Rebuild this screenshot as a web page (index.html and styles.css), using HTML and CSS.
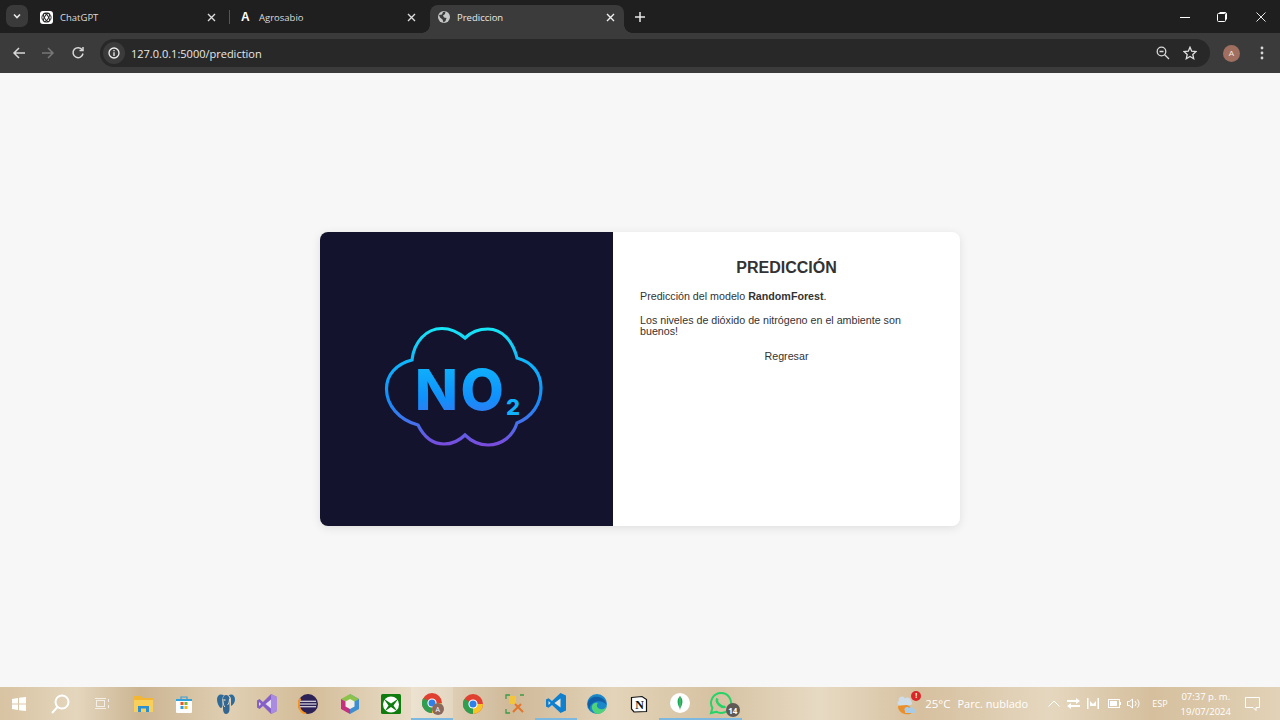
FILE: index.html
```html
<!DOCTYPE html>
<html lang="es">
<head>
  <meta charset="UTF-8">
  <title>Prediccion</title>
  <link rel="stylesheet" href="styles.css">
</head>
<body>
  <div class="tabstrip">
    <div class="tab-menu">
      <svg width="10" height="10" viewBox="0 0 10 10"><path d="M2 3.5 5 6.5 8 3.5" fill="none" stroke="#e8e8e8" stroke-width="1.6"/></svg>
    </div>
    <div class="tab tab-first">
      <span class="favicon favicon-gpt">
        <svg width="13" height="13" viewBox="0 0 13 13" fill="none" stroke="#222" stroke-width="1"><circle cx="6.5" cy="6.5" r="4.6"/><ellipse cx="6.5" cy="6.5" rx="2" ry="4.6" transform="rotate(30 6.5 6.5)"/><ellipse cx="6.5" cy="6.5" rx="2" ry="4.6" transform="rotate(-30 6.5 6.5)"/></svg>
      </span>
      <span class="tab-title">ChatGPT</span>
      <svg class="tab-close" width="9" height="9" viewBox="0 0 9 9"><path d="M1 1 8 8M8 1 1 8" stroke="#dcdcdc" stroke-width="1.4"/></svg>
    </div>
    <div class="tab-sep"></div>
    <div class="tab tab-second">
      <span class="favicon favicon-agro">A</span>
      <span class="tab-title">Agrosabio</span>
      <svg class="tab-close" width="9" height="9" viewBox="0 0 9 9"><path d="M1 1 8 8M8 1 1 8" stroke="#dcdcdc" stroke-width="1.4"/></svg>
    </div>
    <div class="tab tab-active">
      <svg class="favicon" width="12" height="12" viewBox="0 0 12 12"><circle cx="6" cy="6" r="6" fill="#c4c7c5"/><path d="M1 4 4 3.5 5 1 7.5 .6 7 3 5 4.5 6 6.5 8.5 7 7.500 10 5.500 11.500 4.500 8.500 2 6.500Z" fill="#3b3b3b"/></svg>
      <span class="tab-title">Prediccion</span>
      <svg class="tab-close" width="9" height="9" viewBox="0 0 9 9"><path d="M1 1 8 8M8 1 1 8" stroke="#f0f0f0" stroke-width="1.4"/></svg>
    </div>
    <svg class="new-tab" width="10" height="10" viewBox="0 0 10 10"><path d="M5 0V10M0 5H10" stroke="#e8e8e8" stroke-width="1.5"/></svg>
    <div class="window-controls">
      <svg width="10" height="10" viewBox="0 0 10 10"><path d="M0 5.500H10" stroke="#fff"/></svg>
      <svg width="10" height="10" viewBox="0 0 10 10" fill="none" stroke="#fff"><rect x=".5" y="1.500" width="8" height="8" rx="1"/><path d="M2.500 .5H8A1.500 1.500 0 0 1 9.500 2V7.500"/></svg>
      <svg width="10" height="10" viewBox="0 0 10 10"><path d="M.5 .5 9.500 9.500M9.500 .5 .5 9.500" stroke="#e8e8e8"/></svg>
    </div>
  </div>

  <div class="toolbar">
    <svg class="nav-icon" width="14" height="14" viewBox="0 0 14 14" fill="none" stroke="#d8d8d8" stroke-width="1.5"><path d="M13 7H2M7 2 2 7 7 12"/></svg>
    <svg class="nav-icon nav-forward" width="14" height="14" viewBox="0 0 14 14" fill="none" stroke="#777" stroke-width="1.5"><path d="M1 7H12M7 2 12 7 7 12"/></svg>
    <svg class="nav-icon nav-reload" width="14" height="14" viewBox="0 0 14 14" fill="none" stroke="#d8d8d8" stroke-width="1.5"><path d="M11.300 4A5 5 0 1 0 12 7.500"/><path d="M12 1V4.500H8.500"/></svg>
    <div class="urlbar">
      <span class="url-info">
        <svg width="12" height="12" viewBox="0 0 12 12" fill="none" stroke="#f0f0f0" stroke-width="1.3"><circle cx="6" cy="6" r="5"/><path d="M6 5.200V9M6 3V4.200"/></svg>
      </span>
      <span class="url-text">127.0.0.1:5000/prediction</span>
      <svg class="url-zoom" width="14" height="14" viewBox="0 0 14 14" fill="none" stroke="#d8d8d8" stroke-width="1.3"><circle cx="5.500" cy="5.500" r="4.300"/><path d="M3.500 5.500H7.500M8.700 8.700 13 13"/></svg>
      <svg class="url-star" width="14" height="14" viewBox="0 0 14 14" fill="none" stroke="#e0e0e0" stroke-width="1.3"><path d="M7 1.200 8.700 5.200 13 5.600 9.800 8.400 10.700 12.700 7 10.500 3.300 12.700 4.200 8.400 1 5.600 5.300 5.200Z"/></svg>
    </div>
    <span class="avatar">A</span>
    <svg class="menu-dots" width="4" height="14" viewBox="0 0 4 14" fill="#d8d8d8"><circle cx="2" cy="2" r="1.400"/><circle cx="2" cy="7" r="1.400"/><circle cx="2" cy="12" r="1.400"/></svg>
  </div>

  <main class="page">
    <div class="card">
      <div class="card-image">
        <svg width="293" height="294" viewBox="320 232 293 294">
          <defs>
            <linearGradient id="no2Grad" gradientUnits="userSpaceOnUse" x1="0" y1="328" x2="0" y2="445">
              <stop offset="0" stop-color="#17e6f6"/>
              <stop offset=".3" stop-color="#0fb4fb"/>
              <stop offset=".6" stop-color="#1090fb"/>
              <stop offset=".85" stop-color="#4f6bea"/>
              <stop offset="1" stop-color="#7a4bdc"/>
            </linearGradient>
          </defs>
          <path d="M465 338C458 332 451 328.500 442 328.500C426 328.500 414 342 412 360C396 364 386.500 375 386.500 389C386.500 405 399 420 418 425C424 437 433 444 444 444C452 444 459 441 465 435C471 441 479 445 488 445C502 445 513 436 517 423C532 417 541 404 541 388C541 373 532 362 517 358C513 341 502 329 488 329C479 329 471 332 465 338Z" fill="none" stroke="url(#no2Grad)" stroke-width="3.200"/>
          <text class="logo-no" x="415" y="410" fill="url(#no2Grad)">NO</text>
          <text class="logo-sub" x="506" y="415" fill="#10b0fa">2</text>
        </svg>
      </div>
      <div class="card-body">
        <h2>PREDICCIÓN</h2>
        <p>Predicción del modelo <strong>RandomForest</strong>.</p>
        <p>Los niveles de dióxido de nitrógeno en el ambiente son buenos!</p>
        <a class="back-link" href="#">Regresar</a>
      </div>
    </div>
  </main>

  <footer class="taskbar">
    <div class="task-icons">
      <span class="task-item"><svg width="14" height="14" viewBox="0 0 14 14" fill="#fff"><path d="M0 2 6 1V6.600H0ZM7 .8 14 0V6.600H7ZM0 7.400H6V13L0 12ZM7 7.400H14V14L7 13.200Z"/></svg></span>
      <span class="task-item"><svg width="20" height="20" viewBox="0 0 20 20" fill="none" stroke="#fff" stroke-width="2"><circle cx="12" cy="8" r="6.500"/><path d="M7.500 13 2 19"/></svg></span>
      <span class="task-item"><svg width="16" height="14" viewBox="0 0 16 14" fill="none" stroke="#f4efe6" stroke-width="1"><rect x="2.500" y="3.500" width="8" height="6"/><path d="M1 1.500H12M1 11.500H12M14.500 2V5M14.500 8V11"/></svg></span>
      <span class="task-item"><svg width="19" height="17" viewBox="0 0 19 17"><path d="M0 1H7L9 3H19V6H0Z" fill="#f2b632"/><path d="M0 5H19V17H0Z" fill="#f8cf5a"/><path d="M4 17V11H15V17H12V13.500H7V17Z" fill="#2b8fd0"/></svg></span>
      <span class="task-item"><svg width="16" height="18" viewBox="0 0 16 18"><path d="M5 4V2H11V4" fill="none" stroke="#3aa0d8" stroke-width="1.200"/><rect y="4" width="16" height="14" rx="1" fill="#fdfdfd"/><path d="M0 4H16V6H0Z" fill="#2ea0dc"/><rect x="4.500" y="7" width="3" height="3" fill="#e8522f"/><rect x="8.500" y="7" width="3" height="3" fill="#7db632"/><rect x="4.500" y="11" width="3" height="3" fill="#2a9fe0"/><rect x="8.500" y="11" width="3" height="3" fill="#f5b81c"/></svg></span>
      <span class="task-item">
        <svg width="18" height="20" viewBox="0 0 18 20">
          <path d="M4 .5C1.500 .5 0 2.500 0 5.500C0 8.500 1.500 12 3 13.500C4.200 14.500 5.500 13.500 5.500 11V4.500C5.500 3 6.200 2 7 1.200C6 .8 5 .5 4 .5Z" fill="#2f6b9a"/>
          <path d="M14 .5C16.500 .5 18 2.500 18 5.500C18 8.500 16 11 14 12V5C14 3.500 13 2 11.500 1.200C12.500 .8 13.200 .5 14 .5Z" fill="#2f6b9a"/>
          <path d="M9 1C7 1 6 3 6 5V15C6 18 7.500 20 9 20C10.500 20 12.500 18.500 12.500 15.500V5C12.500 3 11 1 9 1Z" fill="#336791"/>
          <path d="M6 5C6 9 6.500 12 8 13M12.500 5C12.500 8 11.500 10 10.500 11" fill="none" stroke="#e9e4da" stroke-width=".9"/>
          <circle cx="7.800" cy="6" r=".8" fill="#e9e4da"/>
        </svg>
      </span>
      <span class="task-item"><svg width="20" height="20" viewBox="0 0 20 20"><path d="M14 0 20 3V17L14 20 6 12 2.500 15 0 13.500V6.500L2.500 5 6 8Z" fill="#8661c5"/><path d="M14 0 20 3V17L14 20Z" fill="#a98be0"/><path d="M14 5.500V14.500L8.500 10Z" fill="#e8def5"/><path d="M2 8V12L4 10Z" fill="#e8def5"/></svg></span>
      <span class="task-item"><svg width="20" height="20" viewBox="0 0 20 20"><circle cx="10" cy="10" r="10" fill="#2c2255"/><path d="M2.500 4.500A10 10 0 0 0 8 19.800" fill="none" stroke="#f7941e" stroke-width="2"/><path d="M2 7.300H18M1.500 10H18.500M2 12.700H18" stroke="#fff" stroke-width="1.100"/></svg></span>
      <span class="task-item"><svg width="18" height="20" viewBox="0 0 18 20"><path d="M9 0 18 5V15L9 20Z" fill="#3f8fd0"/><path d="M9 0 0 5 9 10 18 5Z" fill="#8cc24a"/><path d="M0 5V15L9 20V10Z" fill="#c2307e"/><path d="M9 5 13.500 7.500V12.500L9 15 4.500 12.500V7.500Z" fill="#f3efe8"/></svg></span>
      <span class="task-item">
        <svg width="20" height="20" viewBox="0 0 20 20">
          <rect width="20" height="20" rx="1.500" fill="#107c10"/>
          <circle cx="10" cy="10.500" r="8" fill="#fff"/>
          <path d="M2.500 4.500 10 9.500 17.500 4.500 12.500 11.500 16.500 17.500 10 13 3.500 17.500 7.500 11.500Z" fill="#107c10"/>
        </svg>
      </span>
      <span class="task-item task-open-chrome">
        <svg width="20" height="20" viewBox="0 0 20 20"><circle cx="10" cy="10" r="10" fill="#e0402f"/><path d="M10 10 1.300 5A10 10 0 0 0 10 20Z" fill="#2f9e4f"/><path d="M10 10H20A10 10 0 0 1 10 20Z" fill="#f7c325"/><circle cx="10" cy="10" r="4.600" fill="#fff"/><circle cx="10" cy="10" r="3.500" fill="#2f7fe8"/></svg>
        <span class="task-avatar">A</span>
      </span>
      <span class="task-item"><svg width="20" height="20" viewBox="0 0 20 20"><circle cx="10" cy="10" r="10" fill="#e0402f"/><path d="M10 10 1.300 5A10 10 0 0 0 10 20Z" fill="#2f9e4f"/><path d="M10 10H20A10 10 0 0 1 10 20Z" fill="#f7c325"/><circle cx="10" cy="10" r="4.600" fill="#fff"/><circle cx="10" cy="10" r="3.500" fill="#2f7fe8"/></svg></span>
      <span class="task-item"><svg width="20" height="20" viewBox="0 0 20 20"><path d="M1 5V1H5M15 1H19M1 15V19H5" fill="none" stroke="#3c9a45" stroke-width="1.300"/><path d="M4 2H11V10H4Z" fill="#f3c53a"/><path d="M8 18 16 10M10 10 18 18" stroke="#e2762b" stroke-width="2"/></svg></span>
      <span class="task-item"><svg width="20" height="20" viewBox="0 0 20 20"><path d="M14.500 0 20 2.500V17.500L14.500 20 6 12 2.500 14.700 0 13.500V6.500L2.500 5.300 6 8Z" fill="#0f7fd0"/><path d="M14.500 5.500V14.500L8.500 10Z" fill="#efe3cf"/><path d="M2.500 8V12L4.500 10Z" fill="#efe3cf"/></svg></span>
      <span class="task-item"><svg width="20" height="20" viewBox="0 0 20 20"><circle cx="10" cy="10" r="10" fill="#1a87c9"/><path d="M20 10C20 14 16 16 13 15C10 14 9 11 11 9C7 8 4 11 5 15C6 18 9 20 11 20C16 19.500 20 15 20 10Z" fill="#4fd27a"/><path d="M1 8C3 3 8 2 12 3C16 4 19 7 19 10C16 7 10 6 6 9C3 11 2 14 3 16C1 14 .5 11 1 8Z" fill="#0f5fa8"/></svg></span>
      <span class="task-item"><svg width="18" height="18" viewBox="0 0 18 18"><path d="M1.500 2.500 12 1.500 16.500 4.500V16.500L4 17 1.500 14Z" fill="#fff" stroke="#111" stroke-width="1.200"/><text class="notion-n" x="9.500" y="14" text-anchor="middle">N</text></svg></span>
      <span class="task-item"><svg width="20" height="20" viewBox="0 0 20 20"><circle cx="10" cy="10" r="10" fill="#fff"/><path d="M10 3C13 6 13.500 10 10 16C6.500 10 7 6 10 3Z" fill="#13aa52"/><path d="M10 3V17" stroke="#b8c4a8" stroke-width=".6"/></svg></span>
      <span class="task-item task-open-wa">
        <svg width="24" height="24" viewBox="0 0 24 24" fill="none" stroke="#25d366" stroke-width="2"><path d="M12 2A10 10 0 0 0 3.400 17L2 22 7.200 20.700A10 10 0 1 0 12 2Z"/><path d="M8.500 7.500C7.500 9 8 11.500 10 13.500C12 15.500 14.500 16.500 16.500 15.500" stroke-width="2.500"/></svg>
        <span class="task-badge">14</span>
      </span>
    </div>

    <div class="tray">
      <span class="weather">
        <svg width="23" height="24" viewBox="0 0 23 24"><path d="M1 14A9 8 0 0 0 18 18L10 13Z" fill="#e98f2c"/><path d="M2 9A3 3 0 0 1 8 6.500A3.500 3.500 0 0 1 14 9A2.500 2.500 0 0 1 14 13H3A2 2 0 0 1 2 9Z" fill="#cfdde8"/><path d="M8 19A2.500 2.500 0 0 1 12 16A3 3 0 0 1 17 17A2 2 0 0 1 17 21H8Z" fill="#a9cbe4"/></svg>
        <span class="weather-alert">!</span>
      </span>
      <span class="weather-temp">25°C</span>
      <span class="weather-text">Parc. nublado</span>
      <svg class="tray-chevron" width="12" height="7" viewBox="0 0 12 7" fill="none" stroke="#fff"><path d="M.5 6.500 6 1 11.500 6.500"/></svg>
      <svg class="tray-swap" width="13" height="11" viewBox="0 0 13 11" fill="#fff"><path d="M0 2H9V0L13 3 9 6V4H0ZM13 7H4V5L0 8 4 11V9H13Z"/></svg>
      <svg class="tray-net" width="12" height="11" viewBox="0 0 12 11" fill="#fff"><path d="M0 0H1.500V11H0ZM10.500 0H12V11H10.500ZM3 3 6 6 9 3V8H3Z"/></svg>
      <svg class="tray-batt" width="13" height="9" viewBox="0 0 13 9"><rect x=".5" y=".5" width="11" height="8" fill="none" stroke="#fff"/><rect x="2" y="2" width="7" height="5" fill="#fff"/><rect x="12" y="3" width="1" height="3" fill="#fff"/></svg>
      <svg class="tray-sound" width="13" height="11" viewBox="0 0 13 11" fill="none" stroke="#fff"><path d="M.5 3.500H2.500L5.500 1V10L2.500 7.500H.5Z"/><path d="M8 3A3.500 3.500 0 0 1 8 8M10.500 1.500A6 6 0 0 1 10.500 9.500"/></svg>
      <span class="tray-lang">ESP</span>
      <span class="clock"><span>07:37 p. m.</span><span>19/07/2024</span></span>
      <svg class="tray-notify" width="15" height="14" viewBox="0 0 15 14" fill="none" stroke="#fff"><path d="M.5 .5H14.500V10.500H11V13.500L8 10.500H.5Z"/></svg>
    </div>
  </footer>
</body>
</html>
```

FILE: styles.css
```css
* {
  box-sizing: border-box;
}

html, body {
  height: 100%;
}

body {
  margin: 0;
  height: 720px;
  overflow: hidden;
  display: flex;
  flex-direction: column;
  font-family: "Liberation Sans", Arial, sans-serif;
  background: #f7f7f7;
}

/* browser tabs */
.tabstrip {
  height: 33px;
  display: flex;
  align-items: flex-end;
  background: #1f1f1f;
  color: #dcdcdc;
  font-family: "Open Sans", "Noto Sans", sans-serif;
  font-size: 9.5px;
}

.tab-menu {
  width: 22px;
  height: 22px;
  margin: 0 4px 6px 6px;
  display: flex;
  align-items: center;
  justify-content: center;
  background: #3a3a3a;
  border-radius: 7px;
}

.tab {
  height: 28px;
  width: 194px;
  padding: 0 9px 4px 8px;
  display: flex;
  align-items: center;
  flex-shrink: 0;
}

.tab-first {
  width: 193px;
}

.tab-sep {
  width: 1px;
  height: 14px;
  margin: 0 0 9px 4px;
  background: #555;
}

.tab-second {
  width: 195px;
  padding-left: 11px;
}

.tab-active {
  position: relative;
  width: 194px;
  margin-left: 5px;
  background: #3b3b3b;
  border-radius: 8px 8px 0 0;
  color: #e8e8e8;
}

.tab-active::before,
.tab-active::after {
  content: "";
  position: absolute;
  bottom: 0;
  width: 8px;
  height: 8px;
}

.tab-active::before {
  left: -8px;
  background: radial-gradient(circle at 0 0, #1f1f1f 7.5px, #3b3b3b 8px);
}

.tab-active::after {
  right: -8px;
  background: radial-gradient(circle at 100% 0, #1f1f1f 7.5px, #3b3b3b 8px);
}

.favicon {
  flex-shrink: 0;
}

.favicon-gpt {
  width: 13px;
  height: 13px;
  display: flex;
  background: #fff;
  border-radius: 3px;
}

.favicon-agro {
  width: 12px;
  color: #fff;
  font-family: "Liberation Sans", sans-serif;
  font-size: 12px;
  font-weight: bold;
  line-height: 12px;
}

.tab-title {
  flex: 1;
  margin-left: 7px;
}

.tab-second .tab-title {
  margin-left: 6px;
}

.tab-close {
  flex-shrink: 0;
}

.new-tab {
  margin: 0 0 11px 11px;
}

.window-controls {
  margin: 0 14px 11px auto;
  display: flex;
  gap: 29px;
}

.window-controls svg:first-child {
  margin-right: -2px;
}

/* address bar */
.toolbar {
  height: 40px;
  display: flex;
  align-items: center;
  padding-left: 12px;
  background: #3b3b3b;
}

.nav-forward {
  margin-left: 15px;
}

.nav-reload {
  margin-left: 16px;
}

.urlbar {
  width: 1110px;
  height: 28px;
  margin-left: 15px;
  display: flex;
  align-items: center;
  background: #282828;
  border-radius: 14px;
  color: #e8e8e8;
  font-family: "Open Sans", "Noto Sans", sans-serif;
  font-size: 11px;
}

.url-info {
  width: 22px;
  height: 22px;
  margin-left: 3px;
  display: flex;
  align-items: center;
  justify-content: center;
  background: #3b3b3b;
  border-radius: 50%;
}

.url-text {
  flex: 1;
  margin-left: 6px;
}

.url-star {
  margin: 0 13px 0 13px;
}

.avatar {
  width: 17px;
  height: 17px;
  margin-left: 13px;
  display: flex;
  align-items: center;
  justify-content: center;
  background: #a06f5f;
  border-radius: 50%;
  color: #f5e8e4;
  font-size: 8px;
}

.menu-dots {
  margin-left: 20px;
}

/* page content */
.page {
  flex: 1;
  display: flex;
  justify-content: center;
  align-items: flex-start;
  padding-top: 159px;
  background: #f7f7f7;
}

.card {
  width: 640px;
  height: 294px;
  display: flex;
  background: #fff;
  border-radius: 8px;
  box-shadow: 0 2px 10px rgba(0, 0, 0, 0.1);
  overflow: hidden;
}

.card-image {
  width: 293px;
  flex-shrink: 0;
  background: #13132d;
}

.card-image svg {
  display: block;
}

.logo-no {
  font-family: Inter, "Liberation Sans", sans-serif;
  font-size: 56px;
  font-weight: 800;
  letter-spacing: 2.5px;
}

.logo-sub {
  font-family: Inter, "Liberation Sans", sans-serif;
  font-size: 22px;
  font-weight: 800;
}

.card-body {
  flex: 1;
  padding: 27px 27px 0;
  color: #333;
  font-size: 10.7px;
}

.card-body h2 {
  margin: 0 0 14px;
  font-size: 16px;
  line-height: 18px;
  text-align: center;
}

.card-body p {
  margin: 0 0 12px;
  line-height: 11.5px;
}

.back-link {
  display: block;
  color: #333;
  text-align: center;
  text-decoration: none;
}

/* windows taskbar */
.taskbar {
  height: 33px;
  display: flex;
  justify-content: space-between;
  background: linear-gradient(90deg, #d8c3a2 0%, #e4d6bd 6%, #cbb492 11%, #e0cfb3 18%, #d3bc98 24%, #e8dcc6 32%, #cfb999 40%, #e3d3b8 48%, #d6c2a2 56%, #e7dac3 64%, #d6c09f 72%, #e5d7bf 82%, #d5bf9d 90%, #e2d2b7 100%);
  color: #fff;
  font-family: "Open Sans", "Noto Sans", sans-serif;
}

.task-icons {
  display: flex;
  margin-left: -1.5px;
}

.task-item {
  position: relative;
  width: 41.3px;
  display: flex;
  align-items: center;
  justify-content: center;
}

.task-open-chrome {
  background: rgba(255, 255, 255, 0.2);
  border-bottom: 2px solid #7db8e0;
}

.task-item:nth-child(14),
.task-open-wa,
.task-item:nth-child(17) {
  border-bottom: 2px solid #7db8e0;
}

.task-avatar {
  position: absolute;
  right: 9px;
  bottom: 3px;
  width: 12px;
  height: 12px;
  display: flex;
  align-items: center;
  justify-content: center;
  background: #8a6a5e;
  border-radius: 50%;
  font-size: 7px;
}

.task-badge {
  position: absolute;
  right: 2px;
  bottom: 1px;
  width: 14px;
  height: 14px;
  display: flex;
  align-items: center;
  justify-content: center;
  background: #5f5a55;
  border-radius: 50%;
  font-size: 8px;
  font-weight: 700;
}

.notion-n {
  font-family: "Liberation Serif", serif;
  font-size: 12px;
  font-weight: 700;
  fill: #111;
}

.tray {
  display: flex;
  align-items: center;
  padding-right: 20px;
  font-size: 11.5px;
}

.weather {
  position: relative;
  display: flex;
}

.weather-alert {
  position: absolute;
  top: -1px;
  right: -1px;
  width: 10px;
  height: 10px;
  display: flex;
  align-items: center;
  justify-content: center;
  background: #d9262c;
  border-radius: 50%;
  font-size: 7px;
  font-weight: 700;
}

.weather-temp {
  margin-left: 5px;
}

.weather-text {
  margin-left: 7px;
  font-size: 11px;
}

.tray-chevron {
  margin-left: 20px;
}

.tray-swap {
  margin-left: 7px;
}

.tray-net {
  margin-left: 7px;
}

.tray-batt {
  margin-left: 9px;
}

.tray-sound {
  margin-left: 6px;
}

.tray-lang {
  margin-left: 12px;
  font-size: 9px;
}

.clock {
  margin-left: 13px;
  display: flex;
  flex-direction: column;
  align-items: center;
  font-size: 9.5px;
  line-height: 15px;
}

.tray-notify {
  margin-left: 14px;
}
```
